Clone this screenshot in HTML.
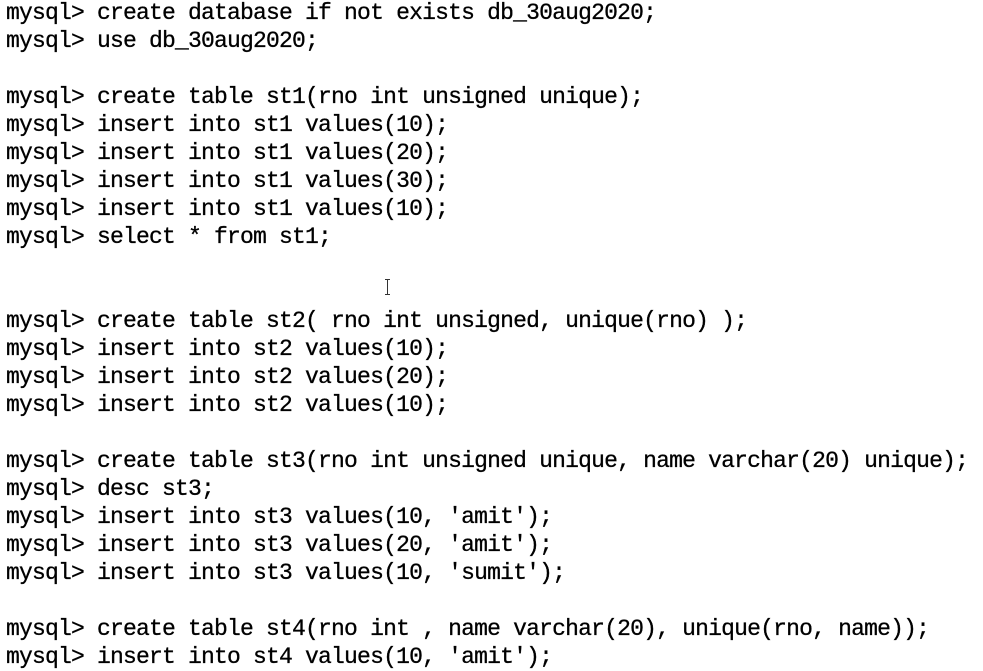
<!DOCTYPE html>
<html><head><meta charset="utf-8"><style>
html,body{margin:0;padding:0;background:#fff;width:983px;height:656px;overflow:hidden;}
pre{margin:0;position:absolute;left:6px;top:-1px;font-family:"Liberation Mono","DejaVu Sans Mono",monospace;font-size:23px;letter-spacing:-0.8px;line-height:28px;color:#000;-webkit-text-stroke:0.3px #000;}
.cur{position:absolute;left:385px;top:279px;width:5px;height:16px;}
.cur:before{content:"";position:absolute;left:2px;top:0;width:1px;height:16px;background:#333;}
.cur:after{content:"";position:absolute;left:0;top:0;width:5px;height:16px;border-top:1px solid #333;border-bottom:1px solid #333;box-sizing:border-box;}
</style></head><body>
<pre>mysql&gt; create database if not exists db_30aug2020;
mysql&gt; use db_30aug2020;

mysql&gt; create table st1(rno int unsigned unique);
mysql&gt; insert into st1 values(10);
mysql&gt; insert into st1 values(20);
mysql&gt; insert into st1 values(30);
mysql&gt; insert into st1 values(10);
mysql&gt; select * from st1;


mysql&gt; create table st2( rno int unsigned, unique(rno) );
mysql&gt; insert into st2 values(10);
mysql&gt; insert into st2 values(20);
mysql&gt; insert into st2 values(10);

mysql&gt; create table st3(rno int unsigned unique, name varchar(20) unique);
mysql&gt; desc st3;
mysql&gt; insert into st3 values(10, 'amit');
mysql&gt; insert into st3 values(20, 'amit');
mysql&gt; insert into st3 values(10, 'sumit');

mysql&gt; create table st4(rno int , name varchar(20), unique(rno, name));
mysql&gt; insert into st4 values(10, 'amit');</pre>
<div class="cur"></div>
</body></html>
